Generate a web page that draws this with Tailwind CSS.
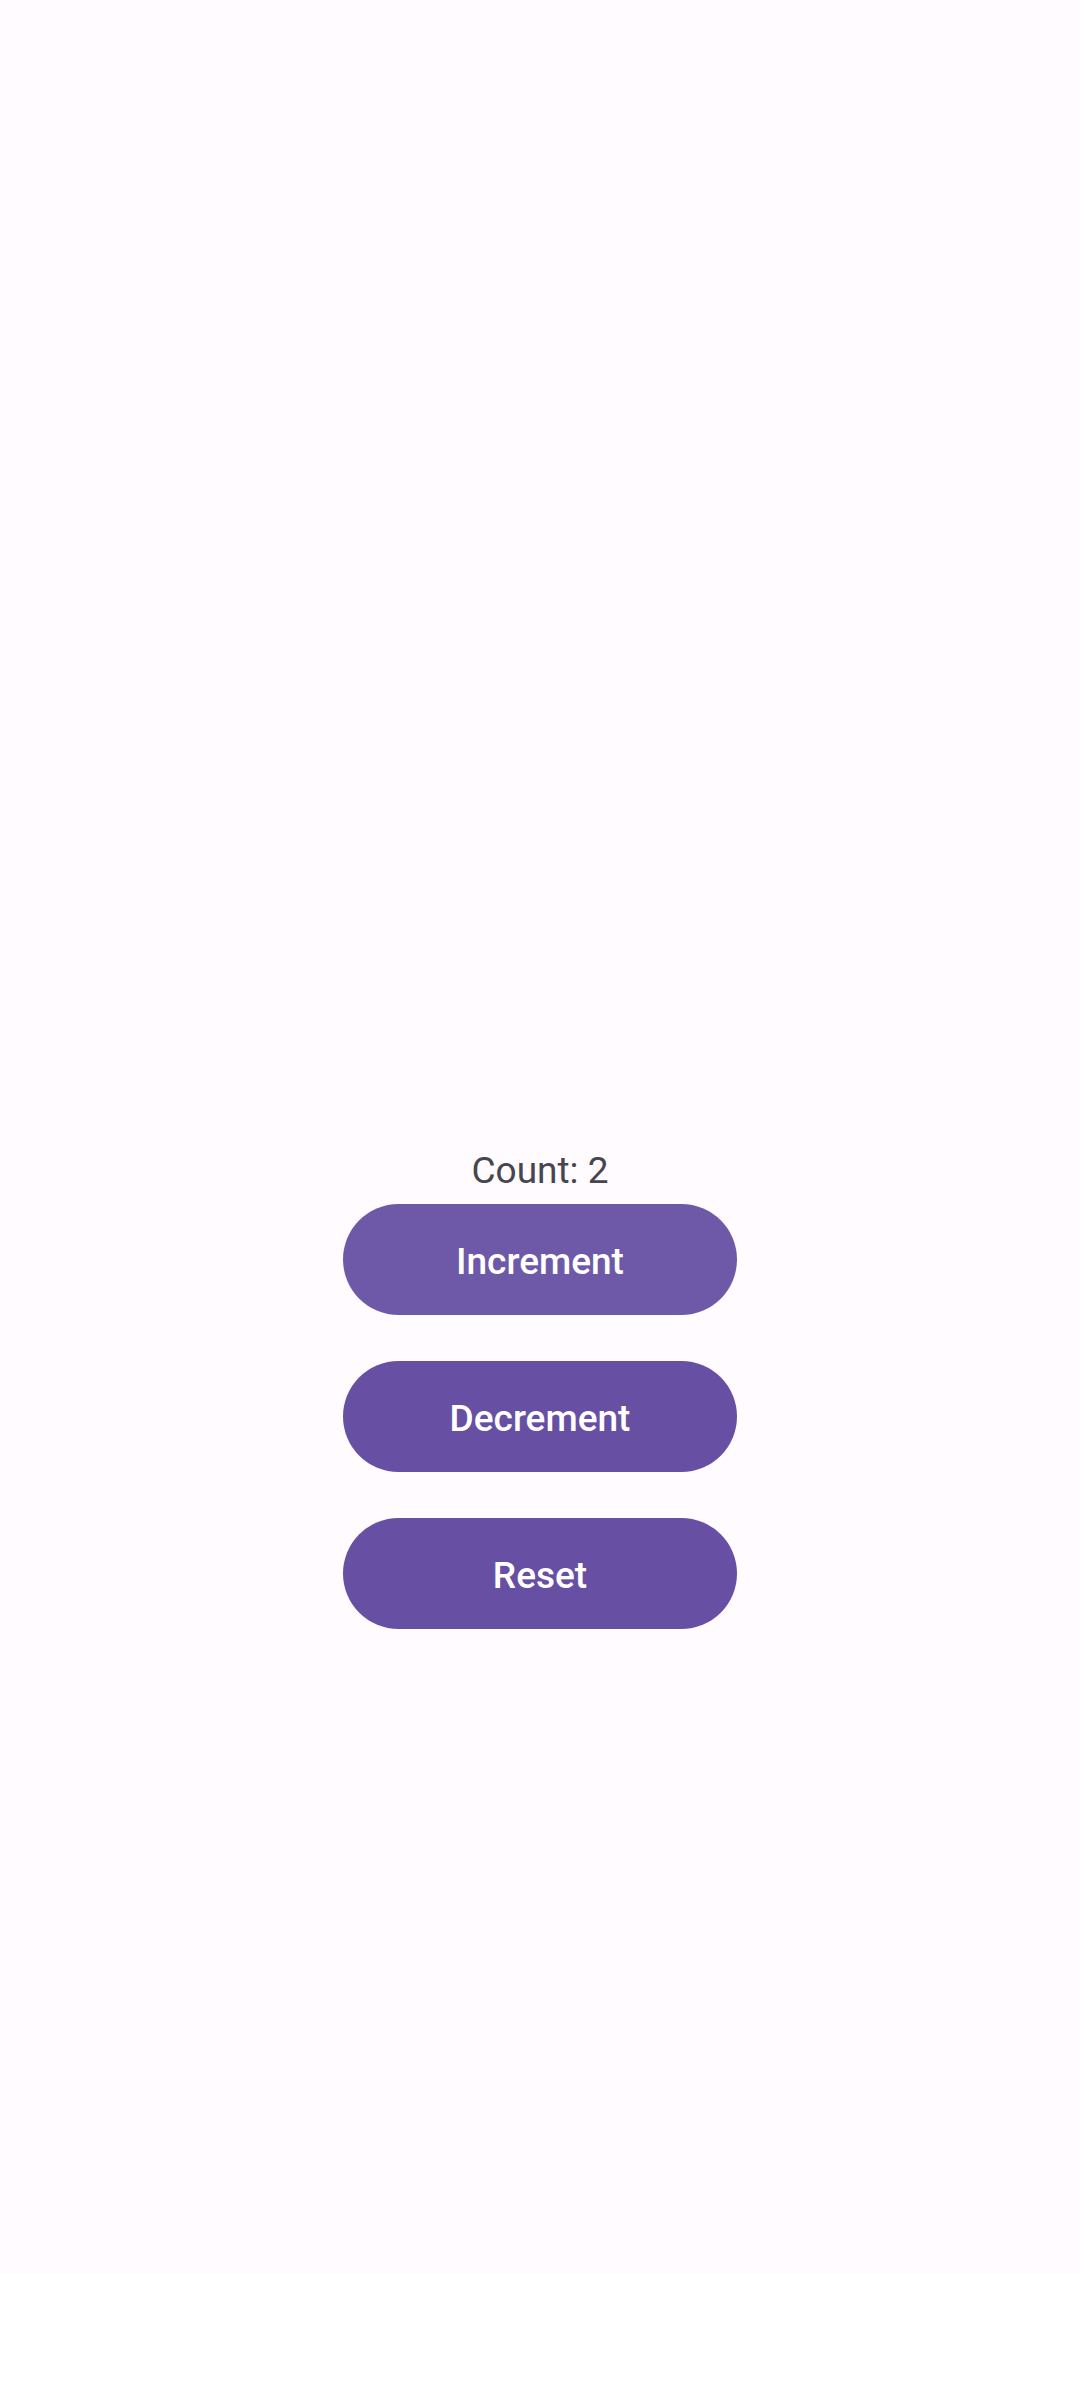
<!DOCTYPE html>
<html lang="en">
<head>
<meta charset="utf-8">
<meta name="viewport" content="width=device-width, initial-scale=1">
<title>Counter</title>
<script src="https://cdn.jsdelivr.net/npm/@tailwindcss/browser@4"></script>
</head>
<body class="flex min-h-screen flex-col bg-white font-[Roboto,sans-serif]">
<main class="flex flex-1 flex-col items-center justify-center bg-[#fffbfe] pt-[501px]">
<p class="mb-2 text-[37px] leading-[50px] text-[#49454f]">Count: 2</p>
<div class="flex w-[394px] max-w-full flex-col gap-[46px]">
<button type="button" class="h-[111px] rounded-full bg-[#6e59a9] pt-1 text-[37px] font-medium text-white">Increment</button>
<button type="button" class="h-[111px] rounded-full bg-[#6750a4] pt-1 text-[37px] font-medium text-white">Decrement</button>
<button type="button" class="h-[111px] rounded-full bg-[#6750a4] pt-1 text-[37px] font-medium text-white">Reset</button>
</div>
</main>
<footer class="h-[126px] bg-white"></footer>
</body>
</html>
